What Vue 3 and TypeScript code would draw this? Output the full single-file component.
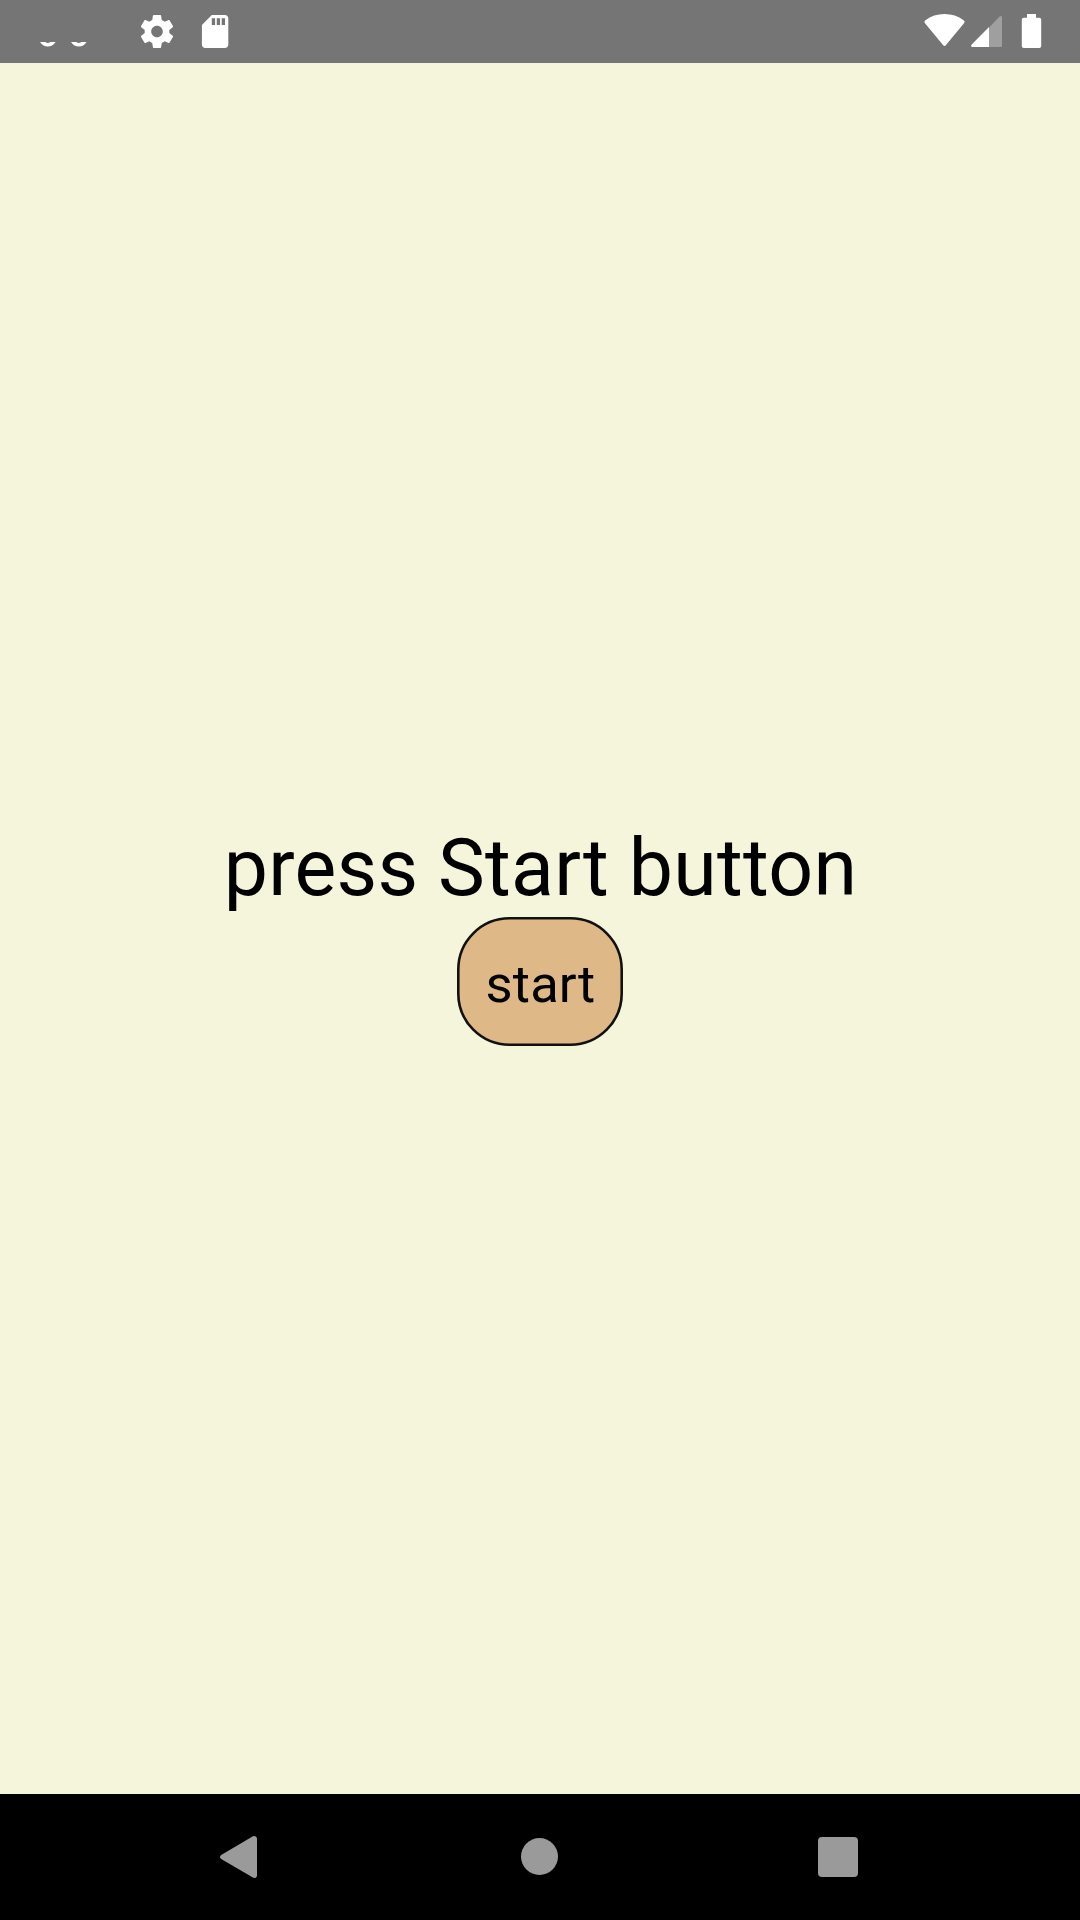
<script setup lang="ts">
import { ref } from 'vue'

const message = ref<string>('press Start button')
const action = ref<string>('start')
</script>

<template>
  <div class="screen">
    <header class="status">
      <div class="group">
        <svg class="eyes" width="48" height="63" viewBox="40 0 48 63" fill="#fff">
          <path d="M40 42H45.3Q47.8 44 50.3 42H55.6Q52.5 46.6 47.8 46.6T40 42Z" />
          <path d="M71 42H76.3Q78.8 44 81.3 42H86.6Q83.5 46.6 78.8 46.6T71 42Z" />
        </svg>
        <svg class="gear" width="40" height="63" viewBox="0 0 40 63" fill="#fff">
          <path transform="translate(0.2 11.7) scale(1.65)" d="M19.43 12.98c.04-.32.07-.64.07-.98s-.03-.66-.07-.98l2.11-1.65c.19-.15.24-.42.12-.64l-2-3.46c-.12-.22-.39-.3-.61-.22l-2.49 1c-.52-.4-1.08-.73-1.69-.98l-.38-2.65C14.46 2.18 14.25 2 14 2h-4c-.25 0-.46.18-.49.42l-.38 2.65c-.61.25-1.17.59-1.69.98l-2.49-1c-.23-.09-.49 0-.61.22l-2 3.46c-.13.22-.07.49.12.64l2.11 1.65c-.04.32-.07.65-.07.98s.03.66.07.98l-2.11 1.65c-.19.15-.24.42-.12.64l2 3.46c.12.22.39.3.61.22l2.49-1c.52.4 1.08.73 1.69.98l.38 2.65c.03.24.24.42.49.42h4c.25 0 .46-.18.49-.42l.38-2.65c.61-.25 1.17-.59 1.69-.98l2.49 1c.23.09.49 0 .61-.22l2-3.46c.12-.22.07-.49-.12-.64l-2.11-1.65zM12 15.5c-1.93 0-3.5-1.57-3.5-3.5s1.57-3.5 3.5-3.5 3.5 1.57 3.5 3.5-1.57 3.5-3.5 3.5z" />
        </svg>
        <svg class="card" width="40" height="63" viewBox="0 0 40 63" fill="#fff">
          <path transform="translate(0.3 11.7) scale(1.65)" d="M18 2h-8L4.02 8 4 20c0 1.1.9 2 2 2h12c1.1 0 2-.9 2-2V4c0-1.1-.9-2-2-2zm-6 6h-2V4h2v4zm3 0h-2V4h2v4zm3 0h-2V4h2v4z" />
        </svg>
      </div>
      <div class="group">
        <svg width="42" height="63" viewBox="923 0 42 63" fill="#fff">
          <path d="M925 23.2Q923.7 21.6 925.4 20.3Q933.5 14 944.5 14T963.6 20.3Q965.3 21.6 964 23.2L945.8 45.3Q944.5 46.6 943.2 45.3Z" />
        </svg>
        <svg class="signal" width="32" height="63" viewBox="970 0 32 63">
          <path d="M989 27.5L999.4 16.7Q1000.5 15.6 1001.3 16Q1002 16.4 1002 17.8V45.5Q1002 47 1000.5 47H989Z" fill="#9f9f9f" />
          <path d="M989 27V47H972.5Q971 47 971 45.8Q971 45.1 971.7 44.4Z" fill="#fff" />
        </svg>
        <svg class="battery" width="21" height="63" viewBox="1021 0 21 63" fill="#fff">
          <path d="M1027 14H1036V17.7H1039.3Q1041.2 17.7 1041.2 19.5V46Q1041.2 47.9 1039.3 47.9H1023.7Q1021.8 47.9 1021.8 46V19.5Q1021.8 17.7 1023.7 17.7H1027Z" />
        </svg>
      </div>
    </header>

    <main class="content">
      <div class="message">{{ message }}</div>
      <button class="start" type="button">
        <svg class="shape" width="166" height="129" viewBox="0 0 166 129">
          <rect x="1.3" y="1.3" width="163.4" height="126.4" rx="51.2" fill="#deb887" stroke="#111" stroke-width="2.6" />
        </svg>
        <span class="label">{{ action }}</span>
      </button>
    </main>

    <nav class="navbar">
      <svg width="40" height="44" viewBox="219 1835 40 44" fill="#9a9a9a">
        <path d="M221.2 1855.1L252.9 1836.3Q254.4 1835.6 255.7 1836.4Q257 1837.3 257 1838.8V1875.4Q257 1876.9 255.7 1877.7Q254.4 1878.4 252.9 1877.6L221.2 1858.9Q220 1858.1 220 1857T221.2 1855.1Z" />
      </svg>
      <svg class="home" width="40" height="44" viewBox="519 1835 40 44" fill="#9a9a9a">
        <circle cx="539.5" cy="1856.5" r="18.5" />
      </svg>
      <svg class="recents" width="40" height="44" viewBox="818 1835 40 44" fill="#9a9a9a">
        <rect x="818" y="1837" width="40" height="40" rx="4" />
      </svg>
    </nav>
  </div>
</template>

<style>
body {
  margin: 0;
}
</style>

<style scoped>
.screen {
  display: flex;
  flex-direction: column;
  width: 1080px;
  height: 1920px;
  overflow: hidden;
  background: #f5f5dc;
  font-family: Roboto, sans-serif;
  color: #000;
}
svg {
  display: block;
  flex: none;
}
.status {
  display: flex;
  justify-content: space-between;
  box-sizing: border-box;
  height: 63px;
  padding: 0 38px 0 40px;
  background: #757575;
}
.group {
  display: flex;
}
.gear {
  margin-left: 49px;
}
.card {
  margin-left: 18px;
}
.signal {
  margin-left: 5px;
}
.battery {
  margin-left: 19px;
}
.content {
  display: flex;
  flex: 1;
  flex-direction: column;
  align-items: center;
  justify-content: center;
}
.message {
  padding: 10px 0 3px 1px;
  font-size: 78.75px;
  letter-spacing: 0.25px;
  line-height: 92px;
  white-space: nowrap;
}
.start {
  position: relative;
  display: flex;
  justify-content: center;
  box-sizing: border-box;
  width: 166px;
  height: 129px;
  padding: 36px 0 0 1px;
  border: 0;
  background: none;
  color: inherit;
  font-family: inherit;
  font-size: 52.5px;
  letter-spacing: 0.15px;
  line-height: 62px;
}
.shape {
  position: absolute;
  inset: 0;
}
.label {
  position: relative;
}
.navbar {
  display: flex;
  align-items: flex-start;
  box-sizing: border-box;
  height: 126px;
  padding: 41px 0 0 219px;
  background: #000;
}
.home {
  margin-left: 260px;
}
.recents {
  margin-left: 259px;
}
</style>
